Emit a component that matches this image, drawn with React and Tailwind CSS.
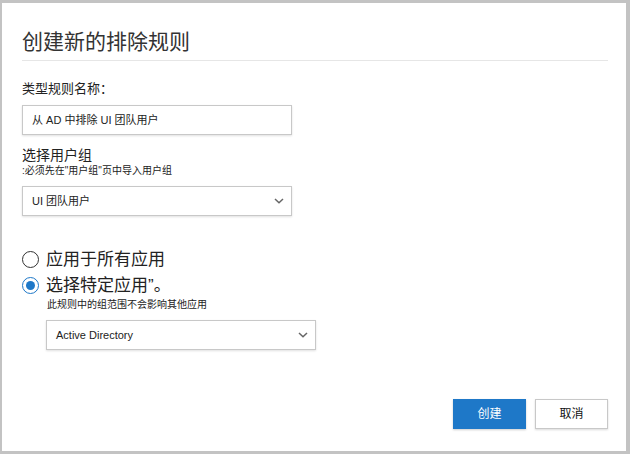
const FONT = '"Liberation Sans", "Noto Sans CJK SC", sans-serif'

function Chevron() {
  return (
    <svg width="10" height="6" viewBox="0 0 10 6" fill="none">
      <path d="M1 1 L5 4.8 L9 1" stroke="#666" strokeWidth="1.5" />
    </svg>
  )
}

function Select({ value, className }) {
  return (
    <div
      className={`flex h-[30px] w-[270px] items-center justify-between border border-[#c8c8c8] bg-white pl-[9px] pr-[7px] text-[11px] text-[#222] shadow-[0_1px_2px_rgba(0,0,0,0.12)] ${className || ''}`}
    >
      <span>{value}</span>
      <Chevron />
    </div>
  )
}

function Radio({ checked, label }) {
  return (
    <div className="flex items-center gap-[7px]">
      {checked ? (
        <span className="flex h-[17px] w-[17px] items-center justify-center rounded-full border-[1.5px] border-[#1e78c8]">
          <span className="h-[9px] w-[9px] rounded-full bg-[#1e78c8]" />
        </span>
      ) : (
        <span className="h-[17px] w-[17px] rounded-full border-[1.5px] border-[#333]" />
      )}
      <span className="text-[17px] leading-none text-[#222]">{label}</span>
    </div>
  )
}

export default function App() {
  return (
    <div
      className="h-[454px] w-[630px] border-l-2 border-t-[3px] border-r-4 border-b-[3px] border-[#c3c3c3] bg-white"
      style={{ fontFamily: FONT }}
    >
      <div className="flex h-full flex-col px-[20px]">
        <h1 className="mt-[28px] text-[21px] font-normal leading-none text-[#333]">创建新的排除规则</h1>
        <div className="mt-[8px] h-px w-[586px] bg-[#e6e6e6]" />

        <label className="mt-[21px] text-[13px] leading-none text-[#222]">类型规则名称：</label>
        <div className="mt-[10px] flex h-[30px] w-[270px] items-center border border-[#c8c8c8] bg-white pl-[9px] text-[11px] text-[#222] shadow-[0_1px_2px_rgba(0,0,0,0.12)]">
          从 AD 中排除 UI 团队用户
        </div>

        <div className="mt-[13px] text-[14px] leading-none text-[#222]">选择用户组</div>
        <div className="mt-[4px] text-[10px] leading-none text-[#222]">:必须先在"用户组"页中导入用户组</div>
        <Select value="UI 团队用户" className="mt-[10px]" />

        <div className="mt-[35px] flex flex-col gap-[9px]">
          <Radio label="应用于所有应用" />
          <Radio checked label="选择特定应用”。" />
        </div>
        <div className="ml-[25px] mt-[6px] text-[10px] leading-none text-[#222]">此规则中的组范围不会影响其他应用</div>
        <Select value="Active Directory" className="ml-[24px] mt-[10px]" />

        <div className="mt-[49px] flex w-[586px] justify-end gap-[9px]">
          <button className="h-[30px] w-[73px] bg-[#1e78c8] text-[12px] text-white shadow-[0_1px_2px_rgba(0,0,0,0.2)]">创建</button>
          <button className="h-[30px] w-[73px] border border-[#c8c8c8] bg-white text-[12px] text-[#111] shadow-[0_1px_2px_rgba(0,0,0,0.15)]">取消</button>
        </div>
      </div>
    </div>
  )
}
